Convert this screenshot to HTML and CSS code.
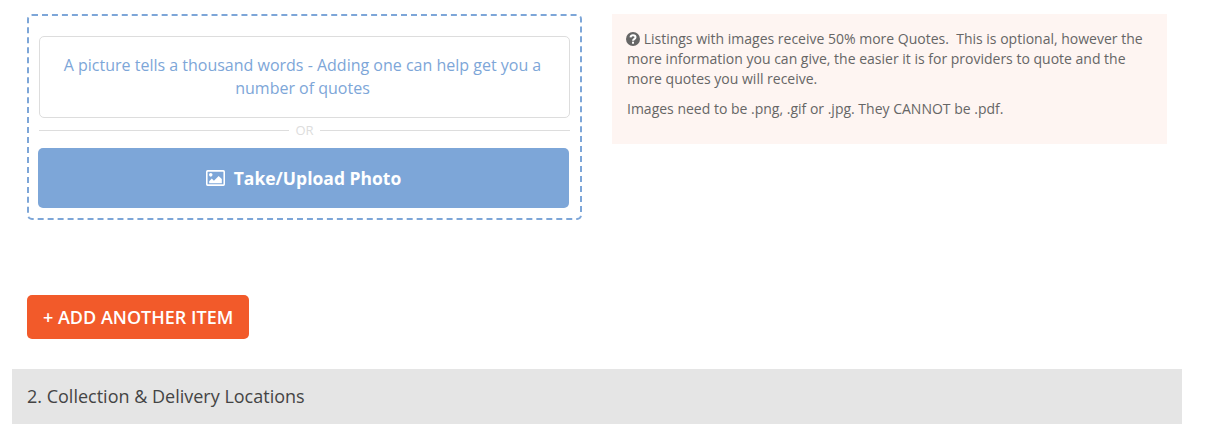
FILE: index.html
```html
<!DOCTYPE html>
<html>
<head>
    <title>Add Item</title>
    <link rel="stylesheet" href="styles.css">
</head>
<body>
    <div class="container">
        <div class="row">
            <div class="col">
                <div class="upload-box">
                    <div class="upload-hint">A picture tells a thousand words - Adding one can help get you a number of quotes</div>
                    <div class="or-divider"><span>OR</span></div>
                    <button class="upload-btn">
                        <svg class="icon-image" viewBox="0 0 18 15" width="19" height="16">
                            <path fill="#fff" fill-rule="evenodd" d="M1.5 0h15A1.5 1.5 0 0 1 18 1.5v12a1.5 1.5 0 0 1-1.5 1.5h-15A1.5 1.5 0 0 1 0 13.500v-12A1.500 1.500 0 0 1 1.500 0zM1.800 1.500a.3.3 0 0 0-.3.3v11.400a.3.3 0 0 0 .3.3h14.400a.3.3 0 0 0 .3-.3V1.800a.3.3 0 0 0-.3-.3z"/>
                            <circle fill="#fff" cx="4.500" cy="4.500" r="1.700"/>
                            <path fill="#fff" d="M3 12.500v-2l2.500-2.500 2 2 4.500-4.500 3 3v4z"/>
                        </svg>
                        Take/Upload Photo
                    </button>
                </div>
            </div>
            <div class="col">
                <div class="info-panel">
                    <p>
                        <svg class="icon-help" viewBox="0 0 14 14" width="14" height="14">
                            <circle fill="#666" cx="7" cy="7" r="7"/>
                            <path fill="none" stroke="#fff" stroke-width="2" d="M4.500 5.400C4.700 4 5.700 3.300 7 3.300c1.500 0 2.500.9 2.500 2 0 1.900-2.500 1.800-2.500 3.400"/>
                            <rect fill="#fff" x="6" y="9.700" width="2" height="2"/>
                        </svg>
                        Listings with images receive 50% more Quotes.&nbsp; This is optional, however the more information you can give, the easier it is for providers to quote and the more quotes you will receive.
                    </p>
                    <p>Images need to be .png, .gif or .jpg. They CANNOT be .pdf.</p>
                </div>
            </div>
        </div>
        <div class="add-row">
            <button class="add-btn">+ ADD ANOTHER ITEM</button>
        </div>
        <div class="section-bar">2. Collection &amp; Delivery Locations</div>
    </div>
</body>
</html>
```

FILE: styles.css
```css
body {
    margin: 0;
    background: #fff;
    font-family: "Open Sans", sans-serif;
    font-size: 14px;
    color: #666;
}
.container {
    width: 1170px;
    margin-left: 12px;
    padding-top: 14px;
}
.row {
    display: flex;
}
.col {
    width: 555px;
    padding: 0 15px;
}
.upload-box {
    border: 2px dashed #7da6d8;
    border-radius: 5px;
    padding: 20px 10px 10px;
}
.upload-hint {
    border: 1px solid #ddd;
    border-radius: 5px;
    padding: 17px 22px 17px 18px;
    height: 46px;
    text-align: center;
    font-size: 16px;
    line-height: 23px;
    color: #7da6d8;
}
.or-divider {
    display: flex;
    align-items: center;
    gap: 6px;
    height: 24px;
    margin-bottom: 6px;
    font-size: 13px;
    color: #ddd;
}
.or-divider::before,
.or-divider::after {
    content: "";
    flex: 1;
    border-top: 1px solid #ddd;
}
.upload-btn {
    display: flex;
    align-items: center;
    justify-content: center;
    gap: 9px;
    width: 531px;
    height: 60px;
    margin-left: -1px;
    padding: 0;
    border: none;
    border-radius: 5px;
    background: #7da6d8;
    color: #fff;
    font-family: inherit;
    font-size: 17.5px;
    font-weight: 700;
}
.info-panel {
    height: 101px;
    padding: 15px 14px 14px 15px;
    background: #fef5f2;
    line-height: 20px;
}
.info-panel p {
    margin: 0 0 10px;
}
.icon-help {
    margin-left: -1px;
    vertical-align: -2px;
}
.add-row {
    padding: 75px 15px 30px;
}
.add-btn {
    display: block;
    height: 44px;
    padding: 0 16px;
    border: none;
    border-radius: 5px;
    background: #f25a2a;
    color: #fff;
    font-family: inherit;
    font-size: 18px;
    font-weight: 600;
}
.section-bar {
    height: 55px;
    padding-left: 15px;
    background: #e5e5e5;
    color: #444;
    font-size: 18px;
    line-height: 55px;
}
```
